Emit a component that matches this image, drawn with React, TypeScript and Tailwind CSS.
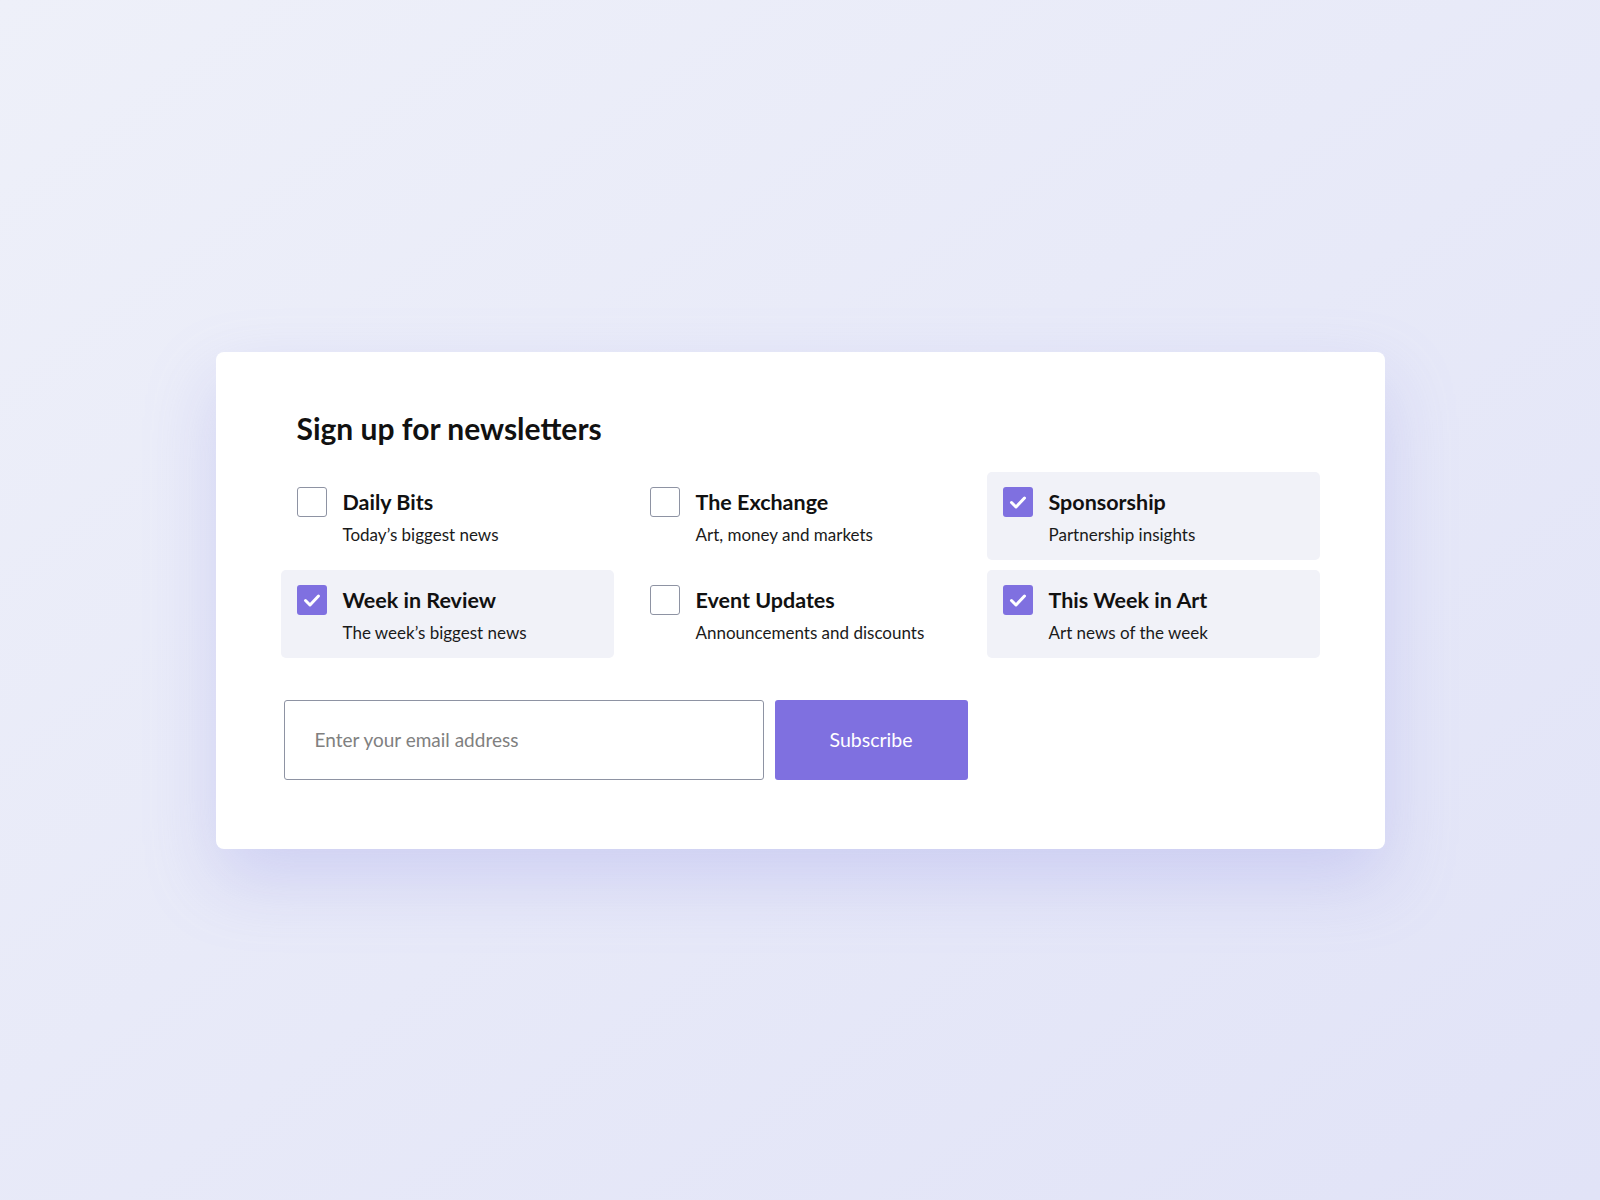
import React from "react";

type Item = { title: string; sub: string; checked: boolean };

const items: Item[] = [
  { title: "Daily Bits", sub: "Today’s biggest news", checked: false },
  { title: "The Exchange", sub: "Art, money and markets", checked: false },
  { title: "Sponsorship", sub: "Partnership insights", checked: true },
  { title: "Week in Review", sub: "The week’s biggest news", checked: true },
  { title: "Event Updates", sub: "Announcements and discounts", checked: false },
  { title: "This Week in Art", sub: "Art news of the week", checked: true },
];

function Box({ checked }: { checked: boolean }) {
  if (checked) {
    return (
      <div className="w-[30px] h-[30px] shrink-0 rounded-[3px] bg-[#7f70e0] flex items-center justify-center">
        <svg width="22" height="22" viewBox="0 0 22 22" fill="none">
          <path d="M4.5 11.5l4.5 4.5 8.5-9" stroke="white" strokeWidth="3" strokeLinecap="round" strokeLinejoin="round" />
        </svg>
      </div>
    );
  }
  return <div className="w-[30px] h-[30px] shrink-0 rounded-[3px] border border-[#8e93a3] bg-white" />;
}

export default function App() {
  return (
    <div
      className="min-h-screen w-full flex items-center justify-center bg-gradient-to-br from-[#eef0f9] to-[#e1e3f7]"
      style={{ fontFamily: "Lato, 'Noto Sans', sans-serif" }}
    >
      <div className="w-[1169px] h-[497px] bg-white rounded-[8px] shadow-[0_30px_70px_rgba(140,140,230,0.28)] px-[65px] pt-[58px]">
        <h1 className="pl-4 text-[30px] leading-[36px] font-bold text-[#111]">Sign up for newsletters</h1>
        <div className="mt-[26px] grid grid-cols-3 gap-x-5 gap-y-[10px]">
          {items.map((it) => (
            <div
              key={it.title}
              className={`flex gap-4 pl-4 pr-4 pt-[15px] h-[88px] rounded-[5px] ${it.checked ? "bg-[#f1f2f8]" : ""}`}
            >
              <Box checked={it.checked} />
              <div className="flex flex-col">
                <div className="text-[21.5px] leading-[30px] font-bold text-[#111]">{it.title}</div>
                <div className="mt-[6px] text-[17px] leading-[24px] text-[#1a1a1a]">{it.sub}</div>
              </div>
            </div>
          ))}
        </div>
        <div className="mt-[42px] ml-[3px] flex gap-[11px]">
          <input
            className="w-[480px] h-[80px] rounded-[3px] border border-[#8e93a3] pl-[30px] text-[19px] text-[#333] placeholder:text-[#808080] outline-none"
            placeholder="Enter your email address"
          />
          <button className="w-[193px] h-[80px] rounded-[3px] bg-[#7f70e0] text-white text-[19.5px]">Subscribe</button>
        </div>
      </div>
    </div>
  );
}
